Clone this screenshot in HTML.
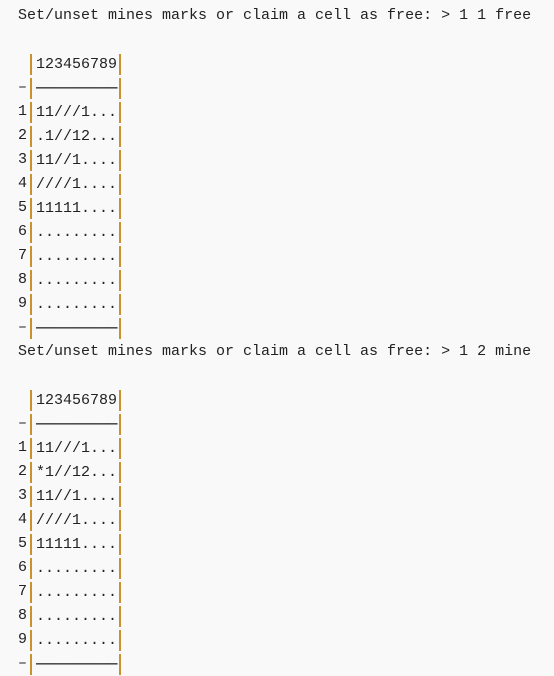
<!DOCTYPE html>
<html><head><style>
body{margin:0;background:#f9f9f9;width:554px;height:676px;overflow:hidden}
.w{position:absolute;left:18px;top:4px;font:15px/24px "Liberation Mono","DejaVu Sans Mono",monospace;color:#222}
.l{height:24px;white-space:pre;display:flex;align-items:center}
.c0{display:inline-block;width:9px}
.cell{display:inline-block;box-sizing:border-box;width:91px;height:21px;line-height:21px;margin-left:3px;padding-left:4px;border-left:2px solid #c8922e;border-right:2px solid #c8922e;overflow:hidden}
.ln{font-family:"DejaVu Sans Mono",monospace}
</style></head><body><div class="w">
<div class="l">Set/unset mines marks or claim a cell as free: &gt; 1 1 free</div>
<div class="l"></div>
<div class="l"><span class="c0"> </span><span class="cell">123456789</span></div>
<div class="l"><span class="c0">–</span><span class="cell ln">─────────</span></div>
<div class="l"><span class="c0">1</span><span class="cell">11///1...</span></div>
<div class="l"><span class="c0">2</span><span class="cell">.1//12...</span></div>
<div class="l"><span class="c0">3</span><span class="cell">11//1....</span></div>
<div class="l"><span class="c0">4</span><span class="cell">////1....</span></div>
<div class="l"><span class="c0">5</span><span class="cell">11111....</span></div>
<div class="l"><span class="c0">6</span><span class="cell">.........</span></div>
<div class="l"><span class="c0">7</span><span class="cell">.........</span></div>
<div class="l"><span class="c0">8</span><span class="cell">.........</span></div>
<div class="l"><span class="c0">9</span><span class="cell">.........</span></div>
<div class="l"><span class="c0">–</span><span class="cell ln">─────────</span></div>
<div class="l">Set/unset mines marks or claim a cell as free: &gt; 1 2 mine</div>
<div class="l"></div>
<div class="l"><span class="c0"> </span><span class="cell">123456789</span></div>
<div class="l"><span class="c0">–</span><span class="cell ln">─────────</span></div>
<div class="l"><span class="c0">1</span><span class="cell">11///1...</span></div>
<div class="l"><span class="c0">2</span><span class="cell">*1//12...</span></div>
<div class="l"><span class="c0">3</span><span class="cell">11//1....</span></div>
<div class="l"><span class="c0">4</span><span class="cell">////1....</span></div>
<div class="l"><span class="c0">5</span><span class="cell">11111....</span></div>
<div class="l"><span class="c0">6</span><span class="cell">.........</span></div>
<div class="l"><span class="c0">7</span><span class="cell">.........</span></div>
<div class="l"><span class="c0">8</span><span class="cell">.........</span></div>
<div class="l"><span class="c0">9</span><span class="cell">.........</span></div>
<div class="l"><span class="c0">–</span><span class="cell ln">─────────</span></div>
</div></body></html>
